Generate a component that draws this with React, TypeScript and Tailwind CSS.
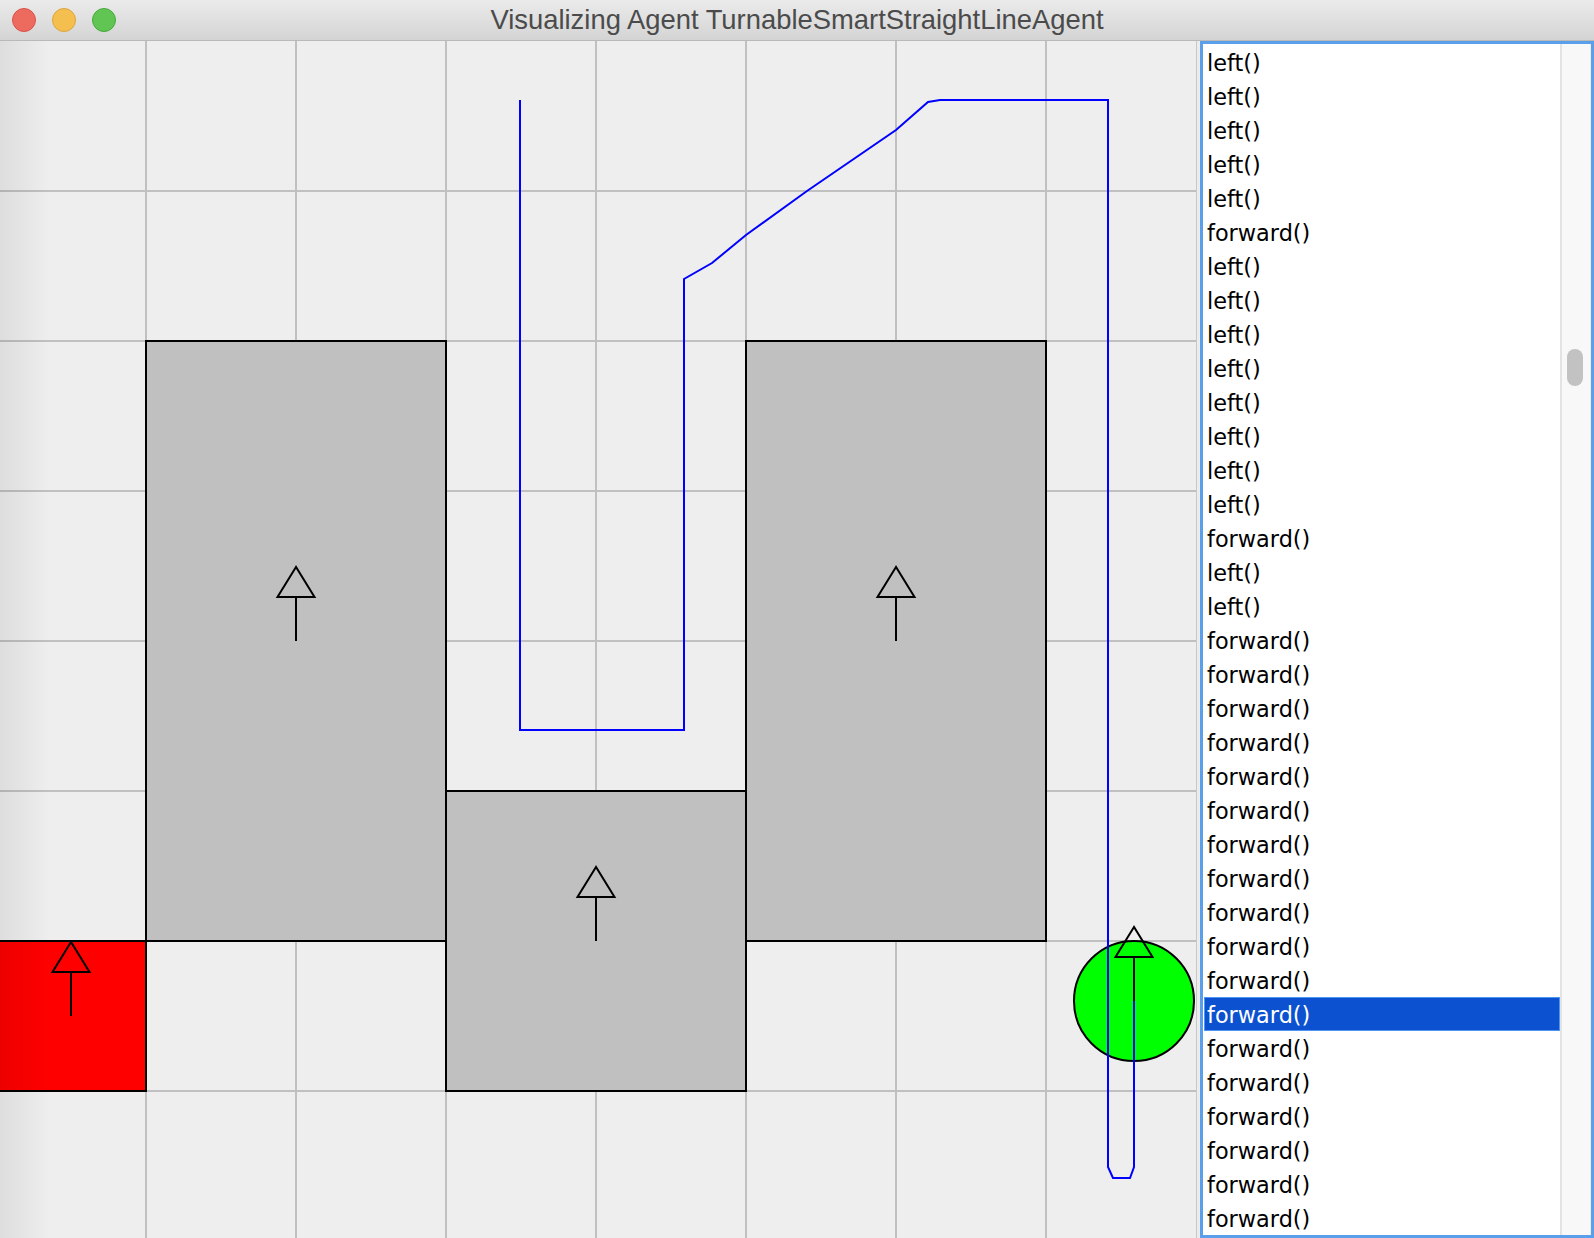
import React from "react";

const items: string[] = [
  ...Array(5).fill("left()"),
  "forward()",
  ...Array(8).fill("left()"),
  "forward()",
  "left()",
  "left()",
  ...Array(18).fill("forward()"),
];
const SELECTED = 28;

function Arrow({ cx, cy }: { cx: number; cy: number }) {
  return (
    <g stroke="#000" strokeWidth={2} fill="none">
      <line x1={cx} y1={cy} x2={cx} y2={cy - 44} />
      <polygon points={`${cx},${cy - 74} ${cx - 18.5},${cy - 44} ${cx + 18.5},${cy - 44}`} />
    </g>
  );
}

function Canvas() {
  const vx = [146, 296, 446, 596, 746, 896, 1046];
  const hy = [191, 341, 491, 641, 791, 941, 1091];
  const path =
    "520,100 520,730 684,730 684,279 712,263 746,235 807,191 896,130 928,102 940,100 1108,100 1108,1167 1113,1178 1130,1178 1134,1167 1134,1001";
  return (
    <svg width={1196} height={1197} viewBox="0 41 1196 1197" className="block">
      <defs>
        <linearGradient id="edge" x1="0" x2="1" y1="0" y2="0">
          <stop offset="0" stopColor="#000" stopOpacity="0.07" />
          <stop offset="1" stopColor="#000" stopOpacity="0" />
        </linearGradient>
      </defs>
      <rect x={0} y={41} width={1196} height={1197} fill="#eeeeee" />
      <g stroke="#c0c0c0" strokeWidth={2}>
        {vx.map((x) => (
          <line key={"v" + x} x1={x} y1={41} x2={x} y2={1238} />
        ))}
        {hy.map((y) => (
          <line key={"h" + y} x1={0} y1={y} x2={1196} y2={y} />
        ))}
      </g>
      <g stroke="#000" strokeWidth={2}>
        <rect x={146} y={341} width={300} height={600} fill="#c0c0c0" />
        <rect x={446} y={791} width={300} height={300} fill="#c0c0c0" />
        <rect x={746} y={341} width={300} height={600} fill="#c0c0c0" />
        <rect x={-4} y={941} width={150} height={150} fill="#ff0000" />
      </g>
      <Arrow cx={296} cy={641} />
      <Arrow cx={896} cy={641} />
      <Arrow cx={596} cy={941} />
      <Arrow cx={71} cy={1016} />
      <circle cx={1134} cy={1001} r={60} fill="#00ff00" stroke="#000" strokeWidth={2} />
      <polyline points={path} fill="none" stroke="#0000ff" strokeWidth={2} />
      <Arrow cx={1134} cy={1001} />
      <rect x={0} y={41} width={50} height={1197} fill="url(#edge)" />
    </svg>
  );
}

export default function App() {
  return (
    <div className="w-[1594px] h-[1238px] flex flex-col overflow-hidden bg-[#ececec]">
      <div className="h-[41px] flex-none grid grid-cols-[1fr_auto_1fr] items-center border-b border-[#b9b9b9] bg-gradient-to-b from-[#ebebeb] to-[#d4d4d4]">
        <div className="flex items-center gap-[16px] pl-[12px] pb-[1px]">
          <div className="w-[24px] h-[24px] rounded-full bg-[#ed6a5e] border border-[#d9534a]" />
          <div className="w-[24px] h-[24px] rounded-full bg-[#f5bf4f] border border-[#dba63c]" />
          <div className="w-[24px] h-[24px] rounded-full bg-[#61c554] border border-[#4aa93f]" />
        </div>
        <div
          className="text-[27.4px] leading-[40px] text-[#4b4b4b] whitespace-nowrap"
          style={{ fontFamily: '"Liberation Sans", Arial, sans-serif' }}
        >
          Visualizing Agent TurnableSmartStraightLineAgent
        </div>
        <div />
      </div>
      <div className="flex-1 flex flex-row min-h-0">
        <div className="w-[1197px] flex-none border-r border-[#c8c8c8] bg-[#eeeeee]">
          <Canvas />
        </div>
        <div className="w-[3px] flex-none bg-[#ececec]" />
        <div className="w-[394px] flex-none border-[3px] border-[#5a9fe9] flex flex-row bg-white">
          <div
            className="flex-1 pt-[1px] pl-[1px] flex flex-col text-[22.4px] text-black"
            style={{ fontFamily: '"DejaVu Sans", sans-serif' }}
          >
            {items.map((t, i) => (
              <div
                key={i}
                className={
                  i === SELECTED
                    ? "h-[34px] flex-none flex items-center pt-[4px] pl-[2px] bg-[#0b51d0] border border-[#4d95f0] text-white"
                    : "h-[34px] flex-none flex items-center pt-[4px] pl-[2px] border border-transparent"
                }
              >
                {t}
              </div>
            ))}
          </div>
          <div className="w-[31px] flex-none bg-[#f8f8f8] border-l-2 border-[#e3e3e3] border-r border-r-[#ededed] pt-[1px]">
            <div className="mt-[304px] ml-[5px] w-[16px] h-[37px] rounded-full bg-[#c2c2c2]" />
          </div>
        </div>
      </div>
    </div>
  );
}
